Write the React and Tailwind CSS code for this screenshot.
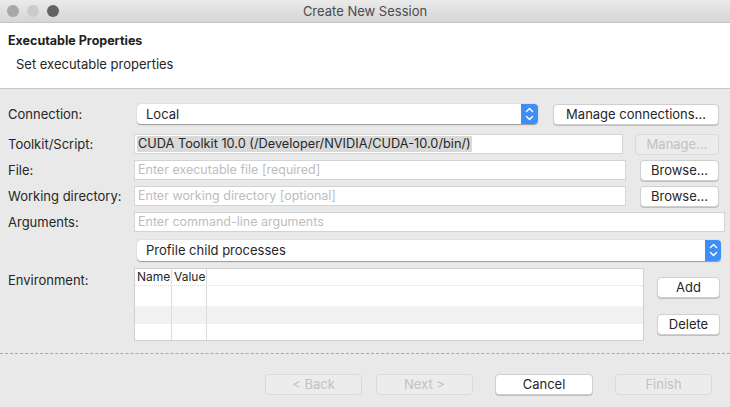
import React from "react";

const font = { fontFamily: 'Inter, "Liberation Sans", Arial, sans-serif' };

function Btn({ children, className = "", disabled = false }) {
  return (
    <div
      className={
        "flex items-center justify-center rounded-[4px] text-[13px] leading-none " +
        (disabled
          ? "bg-[#ececec] border border-[#d9d9d9] text-[#c2c2c2] "
          : "bg-white border border-[#cfcfcf] text-[#262626] shadow-[0_1px_0_#c0c0c0] ") +
        className
      }
    >
      {children}
    </div>
  );
}

function Stepper({ className = "" }) {
  return (
    <div className={"flex items-center justify-center bg-[#3f8ef6] rounded-r-[4px] " + className}>
      <svg width="9" height="16" viewBox="0 0 9 16" fill="none" stroke="white" strokeWidth="1.4" strokeLinecap="round" strokeLinejoin="round">
        <path d="M1.5 5.5 L4.5 2.5 L7.5 5.5" />
        <path d="M1.5 10.5 L4.5 13.5 L7.5 10.5" />
      </svg>
    </div>
  );
}

function Label({ children }) {
  return <div className="w-[134px] shrink-0 pl-[8px] text-[13px] text-[#262626] leading-none">{children}</div>;
}

function Field({ placeholder, className = "" }) {
  return (
    <div className={"h-[20px] bg-white border border-[#d3d3d3] flex items-center pl-[3px] text-[12.5px] text-[#bdbdbd] leading-none " + className}>
      {placeholder}
    </div>
  );
}

function Cols() {
  return (
    <>
      <div className="w-[37px] border-r border-[#dcdcdc]" />
      <div className="w-[35px] border-r border-[#dcdcdc]" />
      <div className="flex-1" />
    </>
  );
}

export default function App() {
  return (
    <div style={font} className="w-[730px] h-[407px] bg-[#e9e9e9] overflow-hidden flex flex-col">
      {/* Title bar */}
      <div className="relative h-[23px] shrink-0 bg-gradient-to-b from-[#ebebeb] to-[#d5d5d5] border-b border-[#c4c4c4] flex items-center">
        <div className="flex items-center gap-[8px] pl-[7px]">
          <div className="w-[12px] h-[12px] rounded-full bg-[#aaa6a7]" />
          <div className="w-[12px] h-[12px] rounded-full bg-[#cbcbcb]" />
          <div className="w-[12px] h-[12px] rounded-full bg-[#616462]" />
        </div>
        <div className="absolute inset-0 flex items-center justify-center pt-[2px] text-[13px] text-[#4b4b4b]">Create New Session</div>
      </div>

      {/* Header */}
      <div className="h-[66px] shrink-0 bg-white border-b border-[#c8c8c8] flex flex-col">
        <div className="pl-[8px] pt-[12px] text-[12.5px] font-bold text-[#222] leading-none">Executable Properties</div>
        <div className="pl-[16px] pt-[10px] text-[13px] text-[#262626] leading-none">Set executable properties</div>
      </div>

      {/* Body */}
      <div className="flex flex-col pt-[14px]">
        {/* Connection */}
        <div className="flex items-center h-[22px]">
          <Label>Connection:</Label>
          <div className="ml-[3px] w-[401px] h-[20px] flex bg-white rounded-[4px] shadow-[0_0.5px_1px_rgba(0,0,0,0.35)]">
            <div className="flex-1 flex items-center pl-[9px] text-[13px] text-[#262626] leading-none">Local</div>
            <Stepper className="w-[17px] h-[20px]" />
          </div>
          <Btn className="ml-[15px] w-[166px] h-[21px]">Manage connections...</Btn>
        </div>

        {/* Toolkit */}
        <div className="flex items-center h-[20px] mt-[9px]">
          <Label>Toolkit/Script:</Label>
          <div className="w-[489px] h-[20px] bg-white border border-[#d3d3d3] flex items-center pl-[2px]">
            <span className="bg-[#d9d9d9] text-[12.75px] text-[#262626] leading-[16px] px-[1px]">CUDA Toolkit 10.0 (/Developer/NVIDIA/CUDA-10.0/bin/)</span>
          </div>
          <Btn disabled className="ml-[12px] w-[84px] h-[21px]">Manage...</Btn>
        </div>

        {/* File */}
        <div className="flex items-center h-[20px] mt-[6px]">
          <Label>File:</Label>
          <Field className="w-[492px]" placeholder="Enter executable file [required]" />
          <Btn className="ml-[14px] w-[79px] h-[21px]">Browse...</Btn>
        </div>

        {/* Working directory */}
        <div className="flex items-center h-[20px] mt-[6px]">
          <Label>Working directory:</Label>
          <Field className="w-[492px]" placeholder="Enter working directory [optional]" />
          <Btn className="ml-[14px] w-[79px] h-[21px]">Browse...</Btn>
        </div>

        {/* Arguments */}
        <div className="flex items-center h-[20px] mt-[6px]">
          <Label>Arguments:</Label>
          <Field className="w-[591px]" placeholder="Enter command-line arguments" />
        </div>

        {/* Profile child processes */}
        <div className="flex items-center h-[22px] mt-[7px]">
          <div className="w-[137px] shrink-0" />
          <div className="w-[584px] h-[21px] flex bg-white rounded-[4px] shadow-[0_0.5px_1px_rgba(0,0,0,0.35)]">
            <div className="flex-1 flex items-center pl-[9px] text-[13px] text-[#262626] leading-none">Profile child processes</div>
            <Stepper className="w-[16px] h-[21px]" />
          </div>
        </div>

        {/* Environment */}
        <div className="flex mt-[7px]">
          <div className="w-[134px] shrink-0 pl-[8px] pt-[6px] text-[13px] text-[#262626] leading-none">Environment:</div>
          <div className="w-[510px] h-[73px] bg-white border border-[#d0d0d0] flex flex-col text-[12px] text-[#262626] leading-none">
            <div className="flex h-[17px] border-b border-dotted border-[#dcdcdc]">
              <div className="w-[37px] border-r border-[#dcdcdc] flex items-center pl-[2px]">Name</div>
              <div className="w-[35px] border-r border-[#dcdcdc] flex items-center pl-[2px]">Value</div>
              <div className="flex-1" />
            </div>
            <div className="flex h-[20px]">
              <Cols />
            </div>
            <div className="flex h-[18px] bg-[#f1f1f1]">
              <Cols />
            </div>
            <div className="flex flex-1">
              <Cols />
            </div>
          </div>
          <div className="flex flex-col ml-[13px] pt-[9px]">
            <Btn className="w-[63px] h-[21px]">Add</Btn>
            <Btn className="w-[63px] h-[21px] mt-[16px]">Delete</Btn>
          </div>
        </div>

        {/* Separator */}
        <div className="mt-[12px] border-t border-dashed border-[#a9a9a9]" />

        {/* Bottom buttons */}
        <div className="flex mt-[20px] pl-[265px]">
          <Btn disabled className="w-[97px] h-[21px]">&lt; Back</Btn>
          <Btn disabled className="ml-[14px] w-[97px] h-[21px]">Next &gt;</Btn>
          <Btn className="ml-[22px] w-[98px] h-[21px]">Cancel</Btn>
          <Btn disabled className="ml-[22px] w-[97px] h-[21px]">Finish</Btn>
        </div>
      </div>
    </div>
  );
}
